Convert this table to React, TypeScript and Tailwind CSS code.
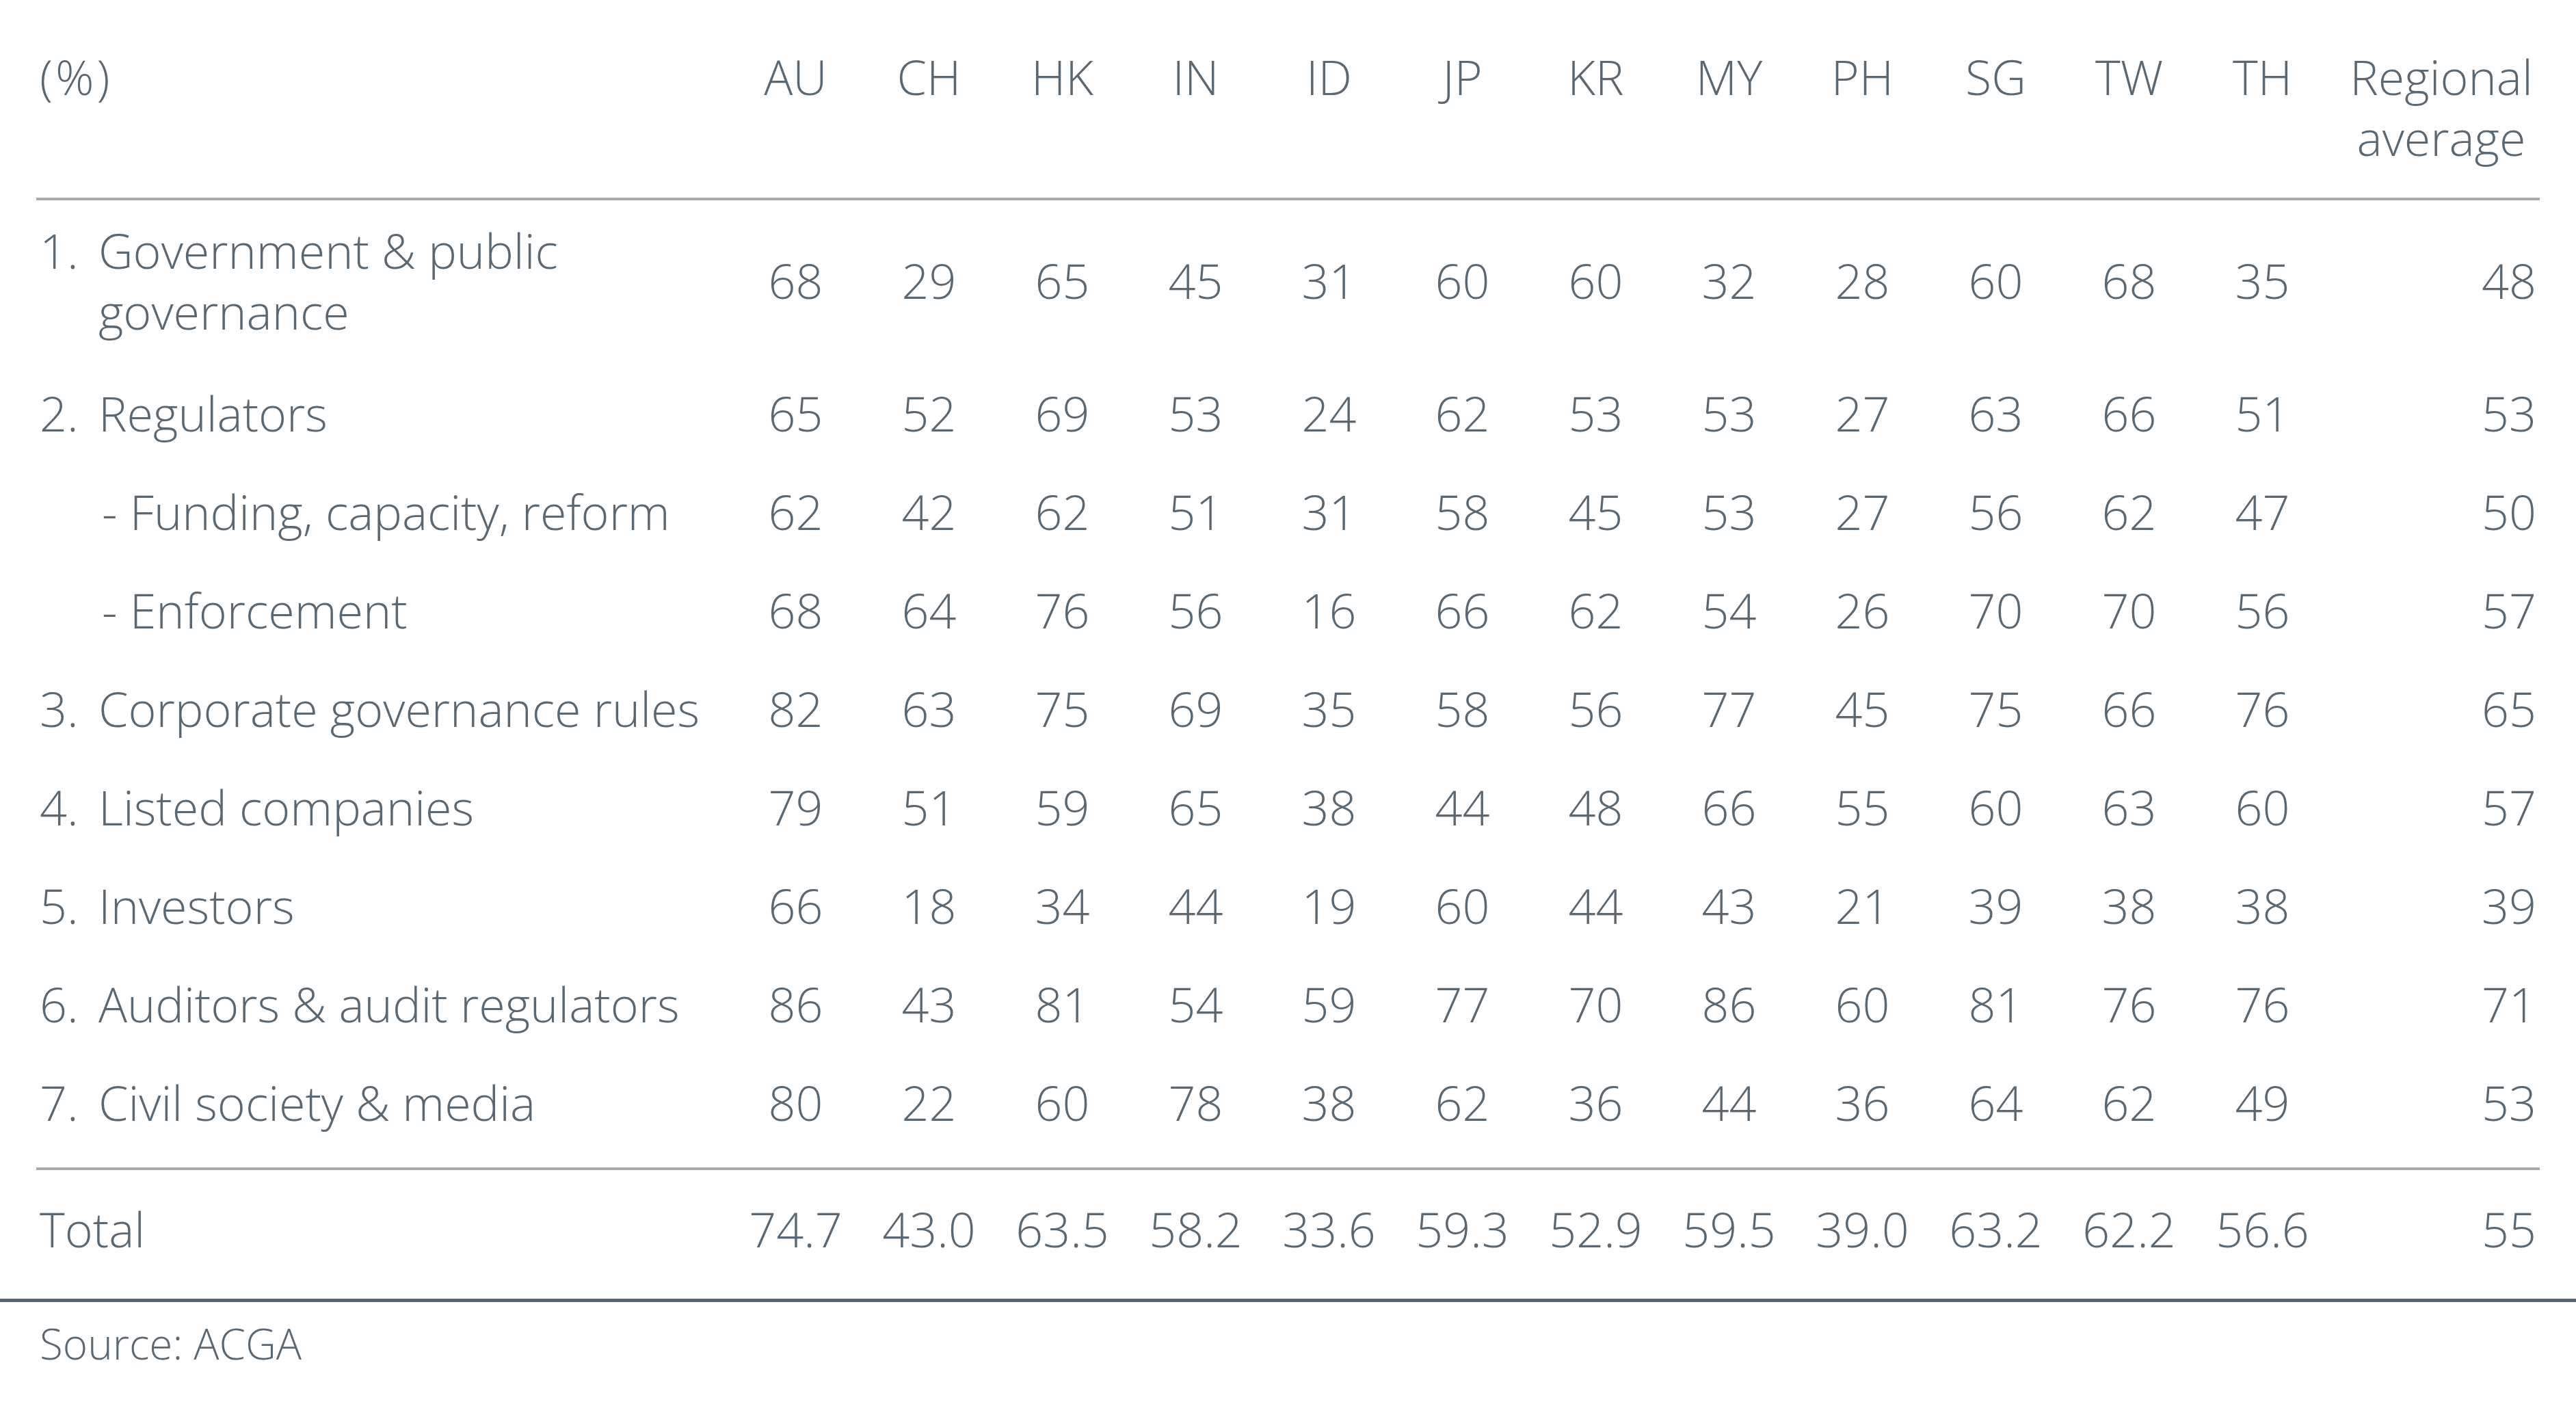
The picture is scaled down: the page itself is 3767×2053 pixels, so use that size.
const countries = ['AU', 'CH', 'HK', 'IN', 'ID', 'JP', 'KR', 'MY', 'PH', 'SG', 'TW', 'TH'];

type Row = {
  num?: string;
  label: string[];
  sub?: boolean;
  values: string[];
  avg: string;
  tall?: boolean;
};

const rows: Row[] = [
  { num: '1.', label: ['Government & public', 'governance'], values: ['68', '29', '65', '45', '31', '60', '60', '32', '28', '60', '68', '35'], avg: '48', tall: true },
  { num: '2.', label: ['Regulators'], values: ['65', '52', '69', '53', '24', '62', '53', '53', '27', '63', '66', '51'], avg: '53' },
  { label: ['- Funding, capacity, reform'], sub: true, values: ['62', '42', '62', '51', '31', '58', '45', '53', '27', '56', '62', '47'], avg: '50' },
  { label: ['- Enforcement'], sub: true, values: ['68', '64', '76', '56', '16', '66', '62', '54', '26', '70', '70', '56'], avg: '57' },
  { num: '3.', label: ['Corporate governance rules'], values: ['82', '63', '75', '69', '35', '58', '56', '77', '45', '75', '66', '76'], avg: '65' },
  { num: '4.', label: ['Listed companies'], values: ['79', '51', '59', '65', '38', '44', '48', '66', '55', '60', '63', '60'], avg: '57' },
  { num: '5.', label: ['Investors'], values: ['66', '18', '34', '44', '19', '60', '44', '43', '21', '39', '38', '38'], avg: '39' },
  { num: '6.', label: ['Auditors & audit regulators'], values: ['86', '43', '81', '54', '59', '77', '70', '86', '60', '81', '76', '76'], avg: '71' },
  { num: '7.', label: ['Civil society & media'], values: ['80', '22', '60', '78', '38', '62', '36', '44', '36', '64', '62', '49'], avg: '53' },
];

const totals = ['74.7', '43.0', '63.5', '58.2', '33.6', '59.3', '52.9', '59.5', '39.0', '63.2', '62.2', '56.6'];

const grid = 'grid grid-cols-[1013px_repeat(12,195px)_1fr] items-center';

export default function App() {
  return (
    <div
      className="min-h-[2053px] w-[3767px] bg-white pt-[68px] text-[70px] font-light leading-[89px] text-[#5a6873]"
      style={{ fontFamily: '"Open Sans", "Noto Sans", sans-serif' }}
    >
      <div className="mx-[53px]">
        {/* Header */}
        <div className={`${grid} items-start border-b-4 border-[#a8a9ad] pb-[43px]`}>
          <div className="pl-[5px] tracking-[4px]">(%)</div>
          {countries.map((c) => (
            <div key={c} className="text-center">
              {c}
            </div>
          ))}
          <div className="pl-[20px] text-center">
            Regional
            <br />
            average
          </div>
        </div>

        {/* Body */}
        <div className="border-b-4 border-[#a8a9ad] pb-[18px]">
          {rows.map((r, i) => (
            <div key={i} className={`${grid} pb-[9px] ${r.tall ? 'h-[244px]' : 'h-[144px]'}`}>
              <div className={`flex pl-[5px] ${r.sub ? 'pl-[96px]' : ''}`}>
                {r.num && <span className="w-[86px] shrink-0">{r.num}</span>}
                <span>
                  {r.label.map((l, j) => (
                    <span key={j} className="block">
                      {l}
                    </span>
                  ))}
                </span>
              </div>
              {r.values.map((v, j) => (
                <div key={j} className="text-center">
                  {v}
                </div>
              ))}
              <div className="pr-[5px] text-right">{r.avg}</div>
            </div>
          ))}
        </div>

        {/* Total */}
        <div className={`${grid} mt-[18px] h-[144px] pb-[8px]`}>
          <div className="pl-[5px]">Total</div>
          {totals.map((v, j) => (
            <div key={j} className="text-center">
              {v}
            </div>
          ))}
          <div className="pr-[5px] text-right">55</div>
        </div>
      </div>

      <div className="mt-[26px] h-[5px] w-full bg-[#5b6770]" />

      <div className="mt-[20px] pl-[58px] text-[62px] leading-[80px]">Source: ACGA</div>
    </div>
  );
}
